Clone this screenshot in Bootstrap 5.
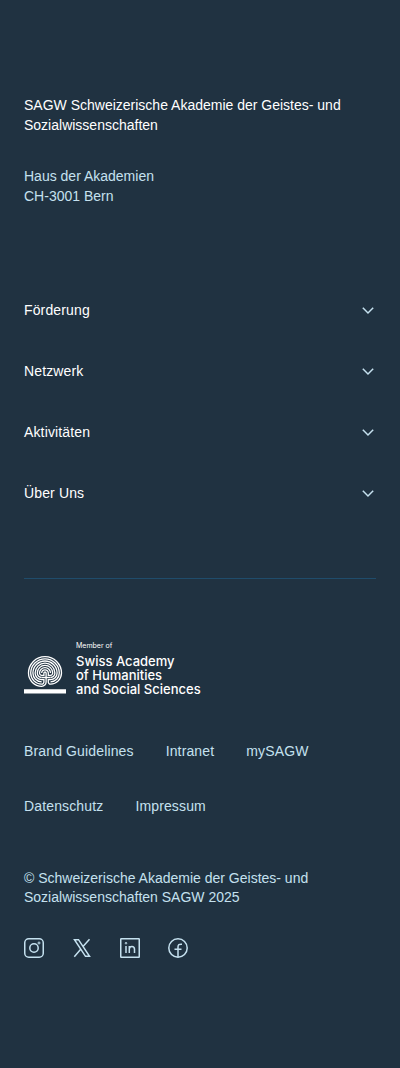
<!DOCTYPE html>
<html lang="de">
<head>
<meta charset="utf-8">
<meta name="viewport" content="width=device-width, initial-scale=1">
<title>SAGW</title>
<link href="https://cdn.jsdelivr.net/npm/bootstrap@5.3.0/dist/css/bootstrap.min.css" rel="stylesheet">
<style>
  body { background: #203241; color: #fff; font-family: "Liberation Sans", Arial, sans-serif; font-size: 14px; line-height: 20px; }
  .site-footer { padding: 95px 24px 109px; }
  .soft, .soft a { color: #c5e1ef; }
  .address { margin-top: 31px; }
  .menu { margin-top: 84px; }
  .menu .menu-toggle { height: 40px; font-size: 14px; line-height: 20px; color: #fff; letter-spacing: .01em; }
  .menu-list { gap: 21px; }
  .rule { border-top: 1px solid #1f4c6b; margin-top: 65px; }
  .member { margin-top: 63px; gap: 10px; color: #fff; }
  .member-text { font-family: Inter, sans-serif; font-size: 13px; line-height: 14px; font-weight: 500; }
  .member-small { font-size: 7px; line-height: 8px; font-weight: 400; margin-bottom: 4px; }
  .links { margin-top: 45px; column-gap: 32px; row-gap: 35px; }
  .links a { letter-spacing: .01em; }
  .copyright { margin-top: 53px; line-height: 19px; }
  .social { margin-top: 31px; gap: 28px; }
</style>
<script src="https://cdn.jsdelivr.net/npm/bootstrap@5.3.0/dist/js/bootstrap.bundle.min.js" defer></script>
</head>
<body>
<svg class="d-none" aria-hidden="true">
  <symbol id="chevron" viewBox="0 0 16 16"><path d="M2.800 5.800 8 11 13.200 5.800" fill="none" stroke="#c5e1ef" stroke-width="1.500"/></symbol>
</svg>
<footer class="site-footer">
  <p class="mb-0">SAGW Schweizerische Akademie der Geistes- und Sozialwissenschaften</p>
  <address class="address soft mb-0">Haus der Akademien<br>CH-3001 Bern</address>

  <nav class="menu menu-list d-flex flex-column" aria-label="Hauptmenü">
    <button type="button" class="menu-toggle btn border-0 rounded-0 p-0 d-flex justify-content-between align-items-center">Förderung <svg width="16" height="16" aria-hidden="true"><use href="#chevron"/></svg></button>
    <button type="button" class="menu-toggle btn border-0 rounded-0 p-0 d-flex justify-content-between align-items-center">Netzwerk <svg width="16" height="16" aria-hidden="true"><use href="#chevron"/></svg></button>
    <button type="button" class="menu-toggle btn border-0 rounded-0 p-0 d-flex justify-content-between align-items-center">Aktivitäten <svg width="16" height="16" aria-hidden="true"><use href="#chevron"/></svg></button>
    <button type="button" class="menu-toggle btn border-0 rounded-0 p-0 d-flex justify-content-between align-items-center">Über Uns <svg width="16" height="16" aria-hidden="true"><use href="#chevron"/></svg></button>
  </nav>

  <div class="rule"></div>

  <a href="#" class="member d-flex align-items-end text-decoration-none">
    <svg width="42" height="41" viewBox="0 0 42 41" aria-hidden="true">
      <g transform="translate(22.100 22.500) scale(-2.200 2.200)" fill="none" stroke="#fff" stroke-width=".6">
        <path d="M0-2V2M-2 0H2"/>
        <path d="M0-2A.5.5 0 0 1 1-2V-1H2A1 1 0 0 0 3-2A2.500 2.500 0 0 0-2-2"/>
        <path d="M2-2A1.500 1.500 0 0 0-1-2V-1H-2A1 1 0 0 1-3-2A3.500 3.500 0 0 1 4-2A2 2 0 0 1 2 0"/>
        <path d="M-2 0A2 2 0 0 1-4-2A4.500 4.500 0 0 1 5-2A3 3 0 0 1 2 1H1V2A1 1 0 0 0 2 3A5 5 0 0 0 7-2A6.500 6.500 0 0 0-6-2A4 4 0 0 0-2 2"/>
        <path d="M2 2A4 4 0 0 0 6-2A5.500 5.500 0 0 0-5-2A3 3 0 0 0-2 1H-1V2A1 1 0 0 1-2 3A5 5 0 0 1-7-2A7.500 7.500 0 0 1 8-2A6 6 0 0 1 2 4A2 2 0 0 1 0 2"/>
      </g>
      <path d="M0 34.200h42v4.400H0z" fill="#fff"/>
    </svg>
    <span class="member-text">
      <span class="member-small d-block">Member of</span>
      Swiss Academy<br>of Humanities<br>and Social Sciences
    </span>
  </a>

  <nav class="links soft d-flex flex-wrap" aria-label="Service">
    <a href="#" class="text-decoration-none">Brand Guidelines</a>
    <a href="#" class="text-decoration-none">Intranet</a>
    <a href="#" class="text-decoration-none">mySAGW</a>
    <a href="#" class="text-decoration-none">Datenschutz</a>
    <a href="#" class="text-decoration-none">Impressum</a>
  </nav>

  <p class="copyright soft mb-0">© Schweizerische Akademie der Geistes- und Sozialwissenschaften SAGW 2025</p>

  <div class="social soft d-flex">
    <a href="#" class="d-flex" aria-label="Instagram"><svg width="20" height="20" fill="none" stroke="currentColor" stroke-width="1.500"><rect x=".75" y=".75" width="18.500" height="18.500" rx="4"/><circle cx="10" cy="10" r="4.200"/><circle cx="15" cy="5" r="1" stroke-width="1"/></svg></a>
    <a href="#" class="d-flex" aria-label="X"><svg width="20" height="20" fill="none" stroke="currentColor" stroke-width="1.500"><path d="M2.500 1.700H6.500L17.500 18.300H13.500ZM17.500 1.200 11 8.500M8.700 11.300 2.300 18.700"/></svg></a>
    <a href="#" class="d-flex" aria-label="LinkedIn"><svg width="20" height="20" fill="none" stroke="currentColor" stroke-width="1.500"><rect x=".75" y=".75" width="18.500" height="18.500" rx=".5"/><path d="M6 8v7M9.300 15V8M9.300 11.300C9.300 7.500 14.500 7.500 14.500 11.300V15"/><circle cx="6" cy="5.200" r=".8" stroke-width="1"/></svg></a>
    <a href="#" class="d-flex" aria-label="Facebook"><svg width="20" height="20" fill="none" stroke="currentColor" stroke-width="1.500"><circle cx="10" cy="10" r="9.200"/><path d="M10 19V9C10 6.800 11 6 14 6.200M6.500 11.300H13.500"/></svg></a>
  </div>
</footer>
</body>
</html>
